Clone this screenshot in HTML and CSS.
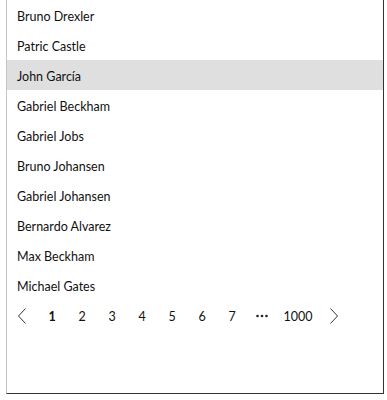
FILE: index.html
```html
<!DOCTYPE html>
<html>

<head>
    <title>People list</title>
    <link rel="stylesheet" href="styles.css">
</head>

<body>
    <div class="frame">
        <ul class="people">
            <li>Bruno Drexler</li>
            <li>Patric Castle</li>
            <li class="selected">John García</li>
            <li>Gabriel Beckham</li>
            <li>Gabriel Jobs</li>
            <li>Bruno Johansen</li>
            <li>Gabriel Johansen</li>
            <li>Bernardo Alvarez</li>
            <li>Max Beckham</li>
            <li>Michael Gates</li>
        </ul>
        <div class="pager">
            <span class="page arrow">
                <svg width="10" height="16" viewBox="0 0 10 16"><path d="M8.5 0.5 L1.5 8 L8.5 15.5" fill="none" stroke="#333" stroke-width="1"/></svg>
            </span>
            <span class="page current">1</span>
            <span class="page">2</span>
            <span class="page">3</span>
            <span class="page">4</span>
            <span class="page">5</span>
            <span class="page">6</span>
            <span class="page">7</span>
            <span class="page dots">
                <svg width="12" height="4" viewBox="0 0 12 4"><circle cx="1.5" cy="2" r="1.3" fill="#222"/><circle cx="6" cy="2" r="1.3" fill="#222"/><circle cx="10.5" cy="2" r="1.3" fill="#222"/></svg>
            </span>
            <span class="page wide">1000</span>
            <span class="page arrow">
                <svg width="10" height="16" viewBox="0 0 10 16"><path d="M1.5 0.5 L8.5 8 L1.5 15.5" fill="none" stroke="#333" stroke-width="1"/></svg>
            </span>
        </div>
    </div>
</body>
</html>
```

FILE: styles.css
```css
body {
    margin: 0;
    background-color: white;
    font-family: Lato, "Open Sans", sans-serif;
    font-size: 12.5px;
    color: #111;
}

.frame {
    margin-left: 6px;
    width: 376px;
    height: 393px;
    border-left: 1px solid #c4c4c4;
    border-right: 1px solid #333;
    border-bottom: 1px solid #333;
}

.people {
    list-style: none;
    margin: 0;
    padding: 0;
}

.people li {
    height: 30px;
    line-height: 30px;
    padding: 2px 0 0 10px;
    box-sizing: border-box;
}

.people li.selected {
    background-color: #dfdfdf;
}

.pager {
    display: flex;
    align-items: center;
    height: 32px;
}

.page {
    min-width: 30px;
    height: 30px;
    display: flex;
    justify-content: center;
    align-items: center;
}

.page.current {
    font-weight: bold;
}

.page.wide {
    padding: 0 6px;
}
```
